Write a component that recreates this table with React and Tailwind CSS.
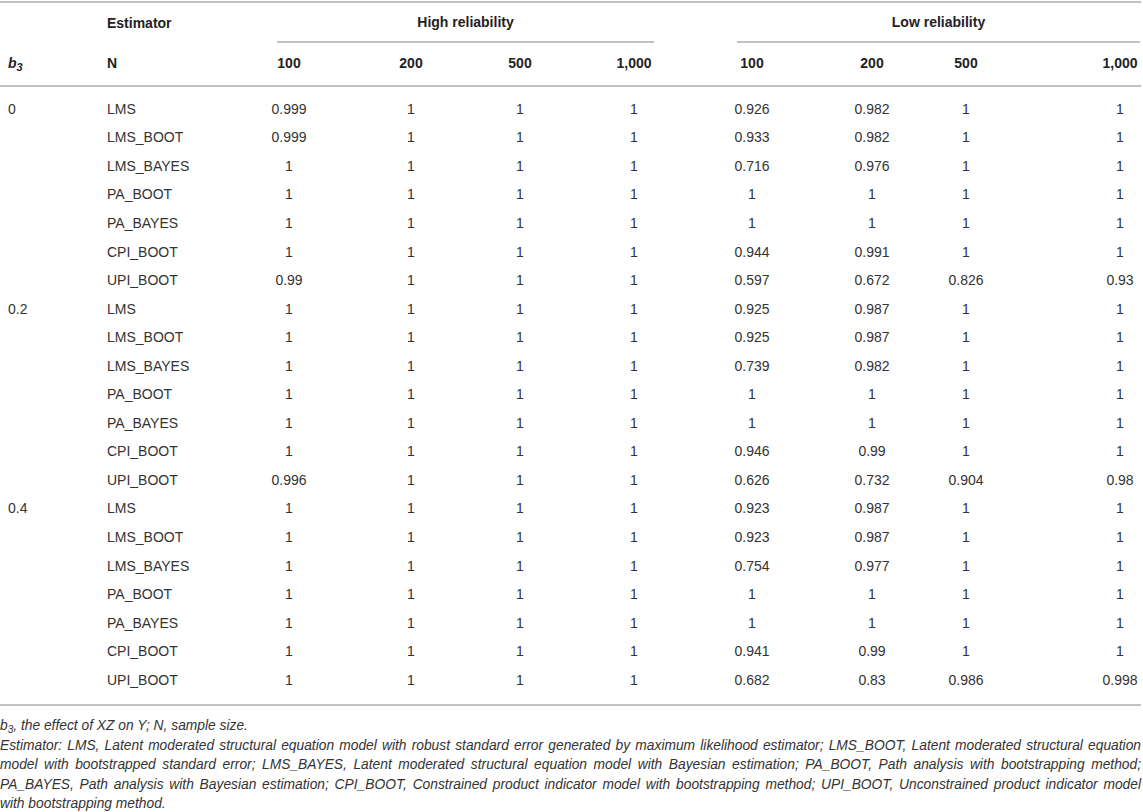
import React from "react";

const NUM_CLS = [
  "ml-[19px] w-[60px]",
  "ml-[62px] w-[60px]",
  "ml-[49px] w-[60px]",
  "ml-[54px] w-[60px]",
  "ml-[58px] w-[60px]",
  "ml-[60px] w-[60px]",
  "ml-[34px] w-[60px]",
  "ml-[104px] w-[40px]",
];

const groups = [
  {
    b: "0",
    rows: [
      ["LMS", ["0.999", "1", "1", "1", "0.926", "0.982", "1", "1"]],
      ["LMS_BOOT", ["0.999", "1", "1", "1", "0.933", "0.982", "1", "1"]],
      ["LMS_BAYES", ["1", "1", "1", "1", "0.716", "0.976", "1", "1"]],
      ["PA_BOOT", ["1", "1", "1", "1", "1", "1", "1", "1"]],
      ["PA_BAYES", ["1", "1", "1", "1", "1", "1", "1", "1"]],
      ["CPI_BOOT", ["1", "1", "1", "1", "0.944", "0.991", "1", "1"]],
      ["UPI_BOOT", ["0.99", "1", "1", "1", "0.597", "0.672", "0.826", "0.93"]],
    ],
  },
  {
    b: "0.2",
    rows: [
      ["LMS", ["1", "1", "1", "1", "0.925", "0.987", "1", "1"]],
      ["LMS_BOOT", ["1", "1", "1", "1", "0.925", "0.987", "1", "1"]],
      ["LMS_BAYES", ["1", "1", "1", "1", "0.739", "0.982", "1", "1"]],
      ["PA_BOOT", ["1", "1", "1", "1", "1", "1", "1", "1"]],
      ["PA_BAYES", ["1", "1", "1", "1", "1", "1", "1", "1"]],
      ["CPI_BOOT", ["1", "1", "1", "1", "0.946", "0.99", "1", "1"]],
      ["UPI_BOOT", ["0.996", "1", "1", "1", "0.626", "0.732", "0.904", "0.98"]],
    ],
  },
  {
    b: "0.4",
    rows: [
      ["LMS", ["1", "1", "1", "1", "0.923", "0.987", "1", "1"]],
      ["LMS_BOOT", ["1", "1", "1", "1", "0.923", "0.987", "1", "1"]],
      ["LMS_BAYES", ["1", "1", "1", "1", "0.754", "0.977", "1", "1"]],
      ["PA_BOOT", ["1", "1", "1", "1", "1", "1", "1", "1"]],
      ["PA_BAYES", ["1", "1", "1", "1", "1", "1", "1", "1"]],
      ["CPI_BOOT", ["1", "1", "1", "1", "0.941", "0.99", "1", "1"]],
      ["UPI_BOOT", ["1", "1", "1", "1", "0.682", "0.83", "0.986", "0.998"]],
    ],
  },
];

function Row({ b, name, vals }) {
  return (
    <div className="flex items-center h-[28.55px]">
      <div className="w-[100px] shrink-0 pl-[8px]">{b}</div>
      <div className="w-[140px] shrink-0 pl-[7px]">{name}</div>
      {vals.map((v, i) => (
        <div key={i} className={"shrink-0 flex justify-center " + NUM_CLS[i]}>
          <span className="whitespace-nowrap">{v}</span>
        </div>
      ))}
    </div>
  );
}

export default function App() {
  const heads = ["100", "200", "500", "1,000", "100", "200", "500", "1,000"];
  const justLine = "text-justify [text-align-last:justify]";
  return (
    <div
      className="w-[1141px] bg-white text-[14px] text-[#333] pt-[1px]"
      style={{ fontFamily: '"Liberation Sans", Arial, Helvetica, sans-serif' }}
    >
      <div className="border-t-2 border-[#c2c2c2]">
        {/* header row 1 */}
        <div className="flex h-[40px] font-bold text-[#222]">
          <div className="w-[100px] shrink-0" />
          <div className="w-[140px] shrink-0 pl-[7px] flex items-center">Estimator</div>
          <div className="ml-[37px] w-[377px] shrink-0 flex items-center justify-center border-b-2 border-[#c2c2c2]">
            High reliability
          </div>
          <div className="ml-[83px] w-[403px] shrink-0 flex items-center justify-center border-b-2 border-[#c2c2c2]">
            Low reliability
          </div>
        </div>
        {/* header row 2 */}
        <div className="flex h-[44px] items-center pb-[2px] font-bold text-[#222] border-b-2 border-[#c2c2c2]">
          <div className="w-[100px] shrink-0 pl-[8px] italic">
            b<sub className="text-[11px] align-baseline relative top-[3px]">3</sub>
          </div>
          <div className="w-[140px] shrink-0 pl-[7px]">N</div>
          {heads.map((h, i) => (
            <div key={i} className={"shrink-0 flex justify-center " + NUM_CLS[i]}>
              <span className="whitespace-nowrap">{h}</span>
            </div>
          ))}
        </div>
        {/* body */}
        <div className="pt-[8px] pb-[10px] border-b-2 border-[#c2c2c2]">
          {groups.map((g) =>
            g.rows.map(([name, vals], j) => (
              <Row key={g.b + name} b={j === 0 ? g.b : ""} name={name} vals={vals} />
            ))
          )}
        </div>
      </div>
      {/* footnotes */}
      <div className="pt-[10px] italic text-[13.8px] leading-[19.5px] text-[#333]">
        <p>
          b<sub className="text-[10px] align-baseline relative top-[3px]">3</sub>, the effect of XZ on Y; N, sample size.
        </p>
        <p className={justLine}>
          Estimator: LMS, Latent moderated structural equation model with robust standard error generated by maximum
          likelihood estimator; LMS_BOOT, Latent moderated structural equation
        </p>
        <p className={justLine}>
          model with bootstrapped standard error; LMS_BAYES, Latent moderated structural equation model with Bayesian
          estimation; PA_BOOT, Path analysis with bootstrapping method;
        </p>
        <p className={justLine}>
          PA_BAYES, Path analysis with Bayesian estimation; CPI_BOOT, Constrained product indicator model with
          bootstrapping method; UPI_BOOT, Unconstrained product indicator model
        </p>
        <p>with bootstrapping method.</p>
      </div>
    </div>
  );
}
